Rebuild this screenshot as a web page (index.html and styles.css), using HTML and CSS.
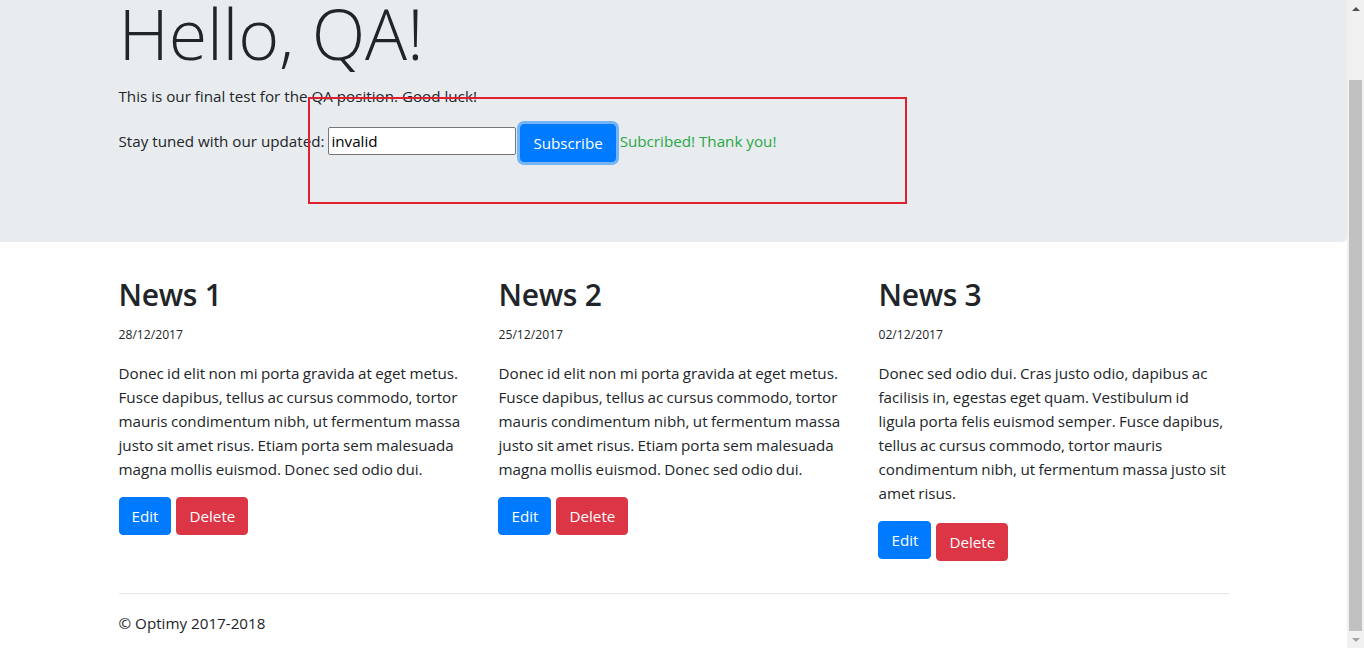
FILE: index.html
```html
<!DOCTYPE html>
<html lang="en">
<head>
<meta charset="utf-8">
<title>Hello, QA!</title>
<link rel="stylesheet" href="styles.css">
</head>
<body>
<div class="app">
  <div class="page">
    <div class="jumbotron">
      <div class="container">
        <h1 class="display">Hello, QA!</h1>
        <p class="intro">This is our final test for the QA position. Good luck!</p>
        <div class="subscribe">Stay tuned with our updated: <input class="email" type="text" value="invalid"> <button class="btn btn-primary btn-focus">Subscribe</button> <span class="success">Subcribed! Thank you!</span></div>
      </div>
    </div>
    <div class="annotation"></div>
    <div class="container">
      <div class="row">
        <div class="col">
          <h2 class="news-title">News 1</h2>
          <p class="date">28/12/2017</p>
          <p class="text">Donec id elit non mi porta gravida at eget metus. Fusce dapibus, tellus ac cursus commodo, tortor mauris condimentum nibh, ut fermentum massa justo sit amet risus. Etiam porta sem malesuada magna mollis euismod. Donec sed odio dui.</p>
          <div class="actions">
            <button class="btn btn-primary">Edit</button>
            <button class="btn btn-danger">Delete</button>
          </div>
        </div>
        <div class="col">
          <h2 class="news-title">News 2</h2>
          <p class="date">25/12/2017</p>
          <p class="text">Donec id elit non mi porta gravida at eget metus. Fusce dapibus, tellus ac cursus commodo, tortor mauris condimentum nibh, ut fermentum massa justo sit amet risus. Etiam porta sem malesuada magna mollis euismod. Donec sed odio dui.</p>
          <div class="actions">
            <button class="btn btn-primary">Edit</button>
            <button class="btn btn-danger">Delete</button>
          </div>
        </div>
        <div class="col">
          <h2 class="news-title">News 3</h2>
          <p class="date">02/12/2017</p>
          <p class="text">Donec sed odio dui. Cras justo odio, dapibus ac facilisis in, egestas eget quam. Vestibulum id ligula porta felis euismod semper. Fusce dapibus, tellus ac cursus commodo, tortor mauris condimentum nibh, ut fermentum massa justo sit amet risus.</p>
          <div class="actions actions-last">
            <button class="btn btn-primary">Edit</button>
            <button class="btn btn-danger btn-lower">Delete</button>
          </div>
        </div>
      </div>
      <hr class="rule">
      <footer class="footer"><p>&copy; Optimy 2017-2018</p></footer>
    </div>
  </div>
  <div class="scrollbar">
    <div class="arrow arrow-up"></div>
    <div class="thumb-track"><div class="thumb"></div></div>
    <div class="arrow arrow-down"></div>
  </div>
</div>
</body>
</html>
```
FILE: styles.css
```css
html, body {
  margin: 0;
  padding: 0;
  overflow: hidden;
}
body {
  font-family: "Open Sans", "Liberation Sans", sans-serif;
  font-size: 15.2px;
  line-height: 24px;
  color: #212529;
  background: #fff;
}
.app {
  display: flex;
  width: 1364px;
  height: 648px;
  overflow: hidden;
}
.page {
  flex: 1;
  position: relative;
  overflow: hidden;
}
.container {
  max-width: 1140px;
  margin: 0 auto;
  padding: 0 15px;
  box-sizing: border-box;
}
.jumbotron {
  background: #e9ecef;
  margin-top: -74px;
  padding: 64px 0;
  margin-bottom: 34px;
  border-radius: 0 0 5px 0;
}
.display {
  font-size: 70px;
  font-weight: 300;
  line-height: 86px;
  margin: 0 0 8px;
  letter-spacing: -0.2px;
}
.intro { margin: 0 0 16px; }
.subscribe { margin: 0 0 16px; }
.email {
  font-family: inherit;
  font-size: 15.2px;
  line-height: 24px;
  padding: 1px 2px;
  border: 1px solid #767676;
  border-radius: 2px;
  width: 182px;
  color: #000;
  box-sizing: content-box;
  height: 24px;
  margin: 0;
}
.btn {
  display: inline-block;
  font-family: inherit;
  font-size: 15.2px;
  line-height: 24px;
  padding: 6px 12px;
  border: 1px solid transparent;
  border-radius: 4px;
  color: #fff;
  vertical-align: middle;
  margin: 0;
  cursor: pointer;
}
.btn-primary { background: #007bff; border-color: #007bff; }
.btn-danger { background: #dc3545; border-color: #dc3545; }
.btn-focus { box-shadow: 0 0 0 3px rgba(0, 123, 255, 0.5); }
.success { color: #28a745; }
.annotation {
  position: absolute;
  left: 308px;
  top: 97px;
  width: 595px;
  height: 103px;
  border: 2px solid #e0202e;
}
.row {
  display: flex;
  margin: 0 -15px;
}
.col {
  width: 33.3333%;
  padding: 0 15px;
  box-sizing: border-box;
}
.news-title {
  font-size: 30px;
  font-weight: 600;
  line-height: 38px;
  margin: 0 0 9px;
  letter-spacing: -0.3px;
}
.date {
  font-size: 12.16px;
  margin: 0 0 14px;
  line-height: 24px;
}
.text {
  margin: 0 0 16px;
  word-spacing: -0.6px;
}
.actions {
  display: flex;
  align-items: flex-start;
  gap: 5px;
  margin-bottom: 16px;
}
.actions-last { margin-top: 3px; }
.btn-lower { margin-top: 2px; }
.rule {
  border: 0;
  border-top: 1px solid rgba(0, 0, 0, 0.1);
  margin: 16px 0 17px;
}
.footer p { margin: 0 0 16px; }
.scrollbar {
  width: 17px;
  height: 648px;
  background: #f1f1f1;
  display: flex;
  flex-direction: column;
  align-items: center;
}
.arrow {
  width: 17px;
  height: 17px;
  display: flex;
  align-items: center;
  justify-content: center;
  flex: none;
}
.arrow-up::before {
  content: "";
  border-left: 4px solid transparent;
  border-right: 4px solid transparent;
  border-bottom: 4px solid #505050;
}
.arrow-down::before {
  content: "";
  border-left: 4px solid transparent;
  border-right: 4px solid transparent;
  border-top: 4px solid #a3a3a3;
}
.thumb-track {
  flex: 1;
  width: 13px;
  padding-top: 63px;
  box-sizing: border-box;
  display: flex;
}
.thumb {
  flex: 1;
  background: #c1c1c1;
}
```
